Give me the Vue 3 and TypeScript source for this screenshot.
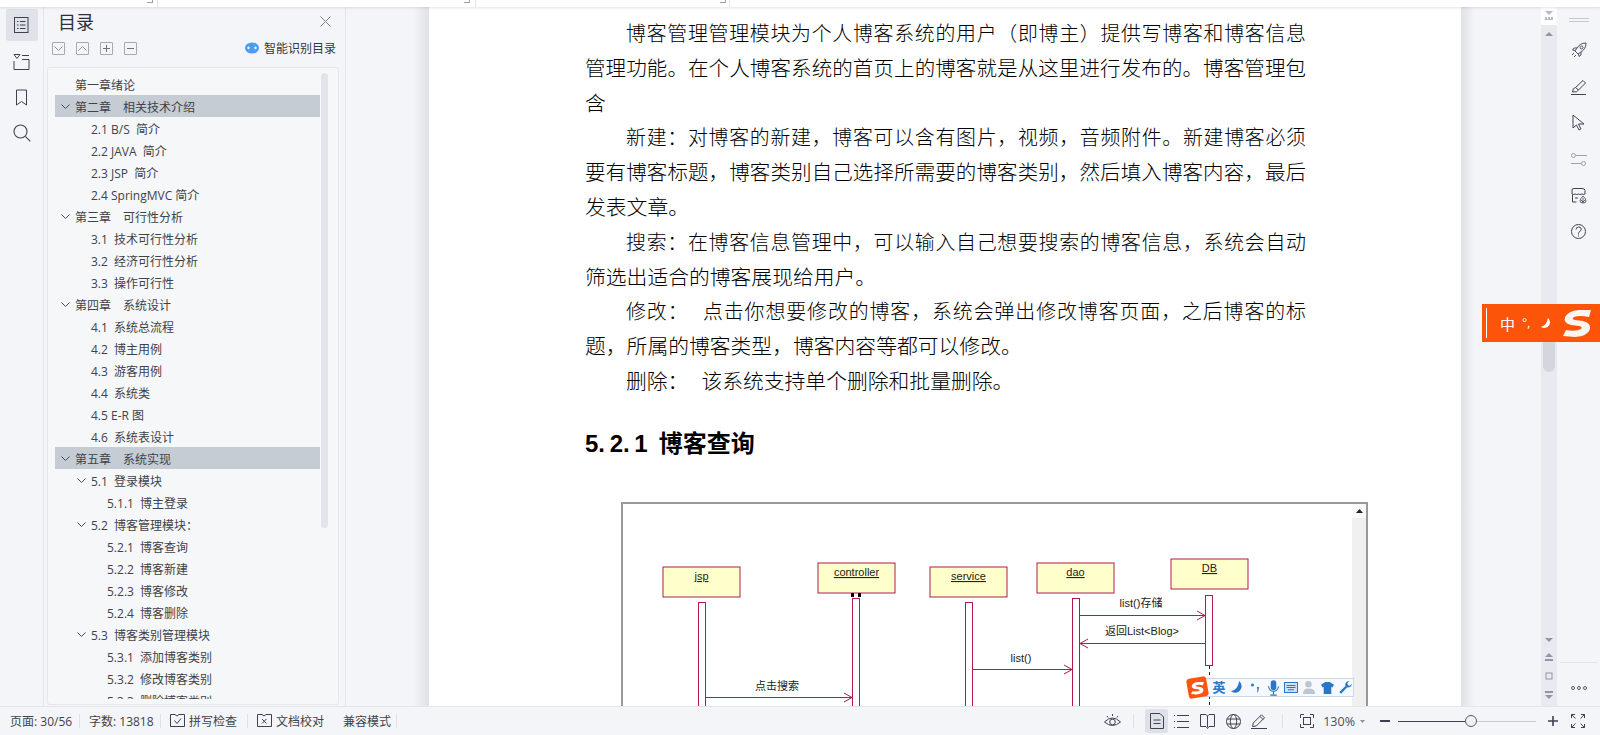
<script setup lang="ts">
interface TocRow { text: string; level: number; open?: boolean; active?: boolean }
const toc: TocRow[] = [
  { text: '第一章绪论', level: 0 },
  { text: '第二章\u3000相关技术介绍', level: 0, open: true, active: true },
  { text: '2.1 B/S  简介', level: 1 },
  { text: '2.2 JAVA  简介', level: 1 },
  { text: '2.3 JSP  简介', level: 1 },
  { text: '2.4 SpringMVC 简介', level: 1 },
  { text: '第三章\u3000可行性分析', level: 0, open: true },
  { text: '3.1  技术可行性分析', level: 1 },
  { text: '3.2  经济可行性分析', level: 1 },
  { text: '3.3  操作可行性', level: 1 },
  { text: '第四章\u3000系统设计', level: 0, open: true },
  { text: '4.1  系统总流程', level: 1 },
  { text: '4.2  博主用例', level: 1 },
  { text: '4.3  游客用例', level: 1 },
  { text: '4.4  系统类', level: 1 },
  { text: '4.5 E-R 图', level: 1 },
  { text: '4.6  系统表设计', level: 1 },
  { text: '第五章\u3000系统实现', level: 0, open: true, active: true },
  { text: '5.1  登录模块', level: 1, open: true },
  { text: '5.1.1  博主登录', level: 2 },
  { text: '5.2  博客管理模块：', level: 1, open: true },
  { text: '5.2.1  博客查询', level: 2 },
  { text: '5.2.2  博客新建', level: 2 },
  { text: '5.2.3  博客修改', level: 2 },
  { text: '5.2.4  博客删除', level: 2 },
  { text: '5.3  博客类别管理模块', level: 1, open: true },
  { text: '5.3.1  添加博客类别', level: 2 },
  { text: '5.3.2  修改博客类别', level: 2 },
  { text: '5.3.3  删除博客类别', level: 2 },
]
const paragraphs: string[][] = [
  ['博客管理管理模块为个人博客系统的用户（即博主）提供写博客和博客信息', '管理功能。在个人博客系统的首页上的博客就是从这里进行发布的。博客管理包', '含'],
  ['新建：对博客的新建，博客可以含有图片，视频，音频附件。新建博客必须', '要有博客标题，博客类别自己选择所需要的博客类别，然后填入博客内容，最后', '发表文章。'],
  ['搜索：在博客信息管理中，可以输入自己想要搜索的博客信息，系统会自动', '筛选出适合的博客展现给用户。'],
  ['修改：  点击你想要修改的博客，系统会弹出修改博客页面，之后博客的标', '题，所属的博客类型，博客内容等都可以修改。'],
  ['删除：  该系统支持单个删除和批量删除。'],
]
const boxes = [
  { x: 42, y: 65, label: 'jsp' },
  { x: 197, y: 61, label: 'controller' },
  { x: 309, y: 65, label: 'service' },
  { x: 416, y: 61, label: 'dao' },
  { x: 550, y: 57, label: 'DB' },
]
const bars = [
  { x: 77, y: 100, h: 160 },
  { x: 231, y: 96, h: 160 },
  { x: 344, y: 100, h: 160 },
  { x: 451, y: 96, h: 160 },
  { x: 584, y: 93, h: 70 },
]
</script>

<template>
  <div class="app">
    <div class="top-strip">
      <i class="crop c1"></i><i class="cline l1"></i>
      <i class="crop c2"></i><i class="cline l2"></i>
      <i class="crop c3"></i><i class="cline l3"></i>
    </div>
    <div class="main">
      <aside class="rail">
        <button class="rail-btn on">
          <svg width="16" height="16" viewBox="0 0 16 16" fill="none" stroke="#3c4252"><rect x=".5" y=".5" width="13.5" height="15"/><path d="M3 4.500h1.500M6 4.500h5.500M3 8h1.500M6 8h5.500M3 11.500h1.500M6 11.500h5.500"/></svg>
        </button>
        <button class="rail-btn">
          <svg width="17" height="17" viewBox="0 0 17 17" fill="none" stroke="#3c4252"><path d="M1 1.500h6L4 5.500zM9 2.500h7M1 8v8.500h15V6.500H9"/></svg>
        </button>
        <button class="rail-btn">
          <svg width="13" height="17" viewBox="0 0 13 17" fill="none" stroke="#3c4252"><path d="M1.500 1h10v15l-5-3.500-5 3.500z"/></svg>
        </button>
        <button class="rail-btn">
          <svg width="18" height="18" viewBox="0 0 18 18" fill="none" stroke="#3c4252" stroke-width="1.100"><circle cx="7.500" cy="7.500" r="6.500"/><path d="M12.300 12.300l5 5"/></svg>
        </button>
      </aside>

      <section class="panel">
        <header class="panel-head">
          <span class="panel-title">目录</span>
          <svg class="close" width="11" height="11" viewBox="0 0 11 11" stroke="#7d828c"><path d="M.5.500l10 10M10.500.500l-10 10"/></svg>
        </header>
        <div class="tools">
          <span class="tool"><svg width="9" height="5" viewBox="0 0 9 5" fill="none" stroke="#8b909a"><path d="M.5.500l4 4 4-4"/></svg></span>
          <span class="tool"><svg width="9" height="5" viewBox="0 0 9 5" fill="none" stroke="#8b909a"><path d="M.5 4.500l4-4 4 4"/></svg></span>
          <span class="tool"><svg width="7" height="7" viewBox="0 0 7 7" stroke="#6c717b"><path d="M0 3.500h7M3.500 0v7"/></svg></span>
          <span class="tool"><svg width="7" height="7" viewBox="0 0 7 7" stroke="#6c717b"><path d="M0 3.500h7"/></svg></span>
          <span class="smart">
            <svg width="14" height="12" viewBox="0 0 14 12"><ellipse cx="7" cy="6" rx="7" ry="5.600" fill="#4d9bf2"/><path d="M2.500 5.500q1-1 2 0M9.500 5.500q1-1 2 0" stroke="#fff" fill="none"/><circle cx="3.500" cy="6.300" r="1" fill="#fff"/><circle cx="10.500" cy="6.300" r="1" fill="#fff"/></svg>
            智能识别目录
          </span>
        </div>
        <div class="toc-box">
          <div class="toc-list">
            <div v-for="r in toc" :key="r.text" class="toc-row" :class="[`lv${r.level}`, { active: r.active }]">
              <svg v-if="r.open" class="chev" width="9" height="5" viewBox="0 0 9 5" fill="none" stroke="#444a55"><path d="M.5.500l4 4 4-4"/></svg>
              <span>{{ r.text }}</span>
            </div>
          </div>
          <div class="toc-scroll"></div>
        </div>
      </section>

      <main class="doc">
        <article class="page">
          <p v-for="(para, i) in paragraphs" :key="i" class="para">
            <span
              v-for="(line, j) in para"
              :key="j"
              class="line"
              :class="{ first: j === 0, just: j < para.length - 1 }"
            >{{ line }}</span>
          </p>
          <h3 class="heading"><span class="num">5. 2. 1</span>博客查询</h3>
          <svg class="diagram" width="747" height="240" viewBox="0 0 747 240">
            <rect x="731" y="1" width="15" height="239" fill="#f0f0f0"/>
            <rect x="731" y="1" width="15" height="15" fill="#fafafa"/>
            <path d="M735 11h7l-3.500-4z" fill="#222"/>
            <rect x="1" y="1" width="745" height="240" fill="none" stroke="#999" stroke-width="2"/>
            <g v-for="b in boxes" :key="b.label">
              <rect :x="b.x" :y="b.y" width="77" height="30" fill="#ffffcc" stroke="#b01a50"/>
              <text :x="b.x + 38.500" :y="b.y + 13" class="box-label">{{ b.label }}</text>
            </g>
            <rect x="230" y="91" width="3" height="4" fill="#000"/>
            <rect x="237" y="91" width="3" height="4" fill="#000"/>
            <rect v-for="b in bars" :key="b.x" :x="b.x + .5" :y="b.y + .5" width="7" :height="b.h" fill="#fff" stroke="#b01a50"/>
            <path d="M588.500 164v80" stroke="#222" stroke-dasharray="3 3" fill="none"/>
            <g fill="none" stroke="#b01a50">
              <path d="M459 113.500h125M576 109l8 4.500-8 4.500"/>
              <path d="M584 141.500H459M467 137l-8 4.500 8 4.500"/>
              <path d="M352 167.500h99M443 163l8 4.500-8 4.500"/>
              <path d="M85 195.500h146M223 191l8 4.500-8 4.500"/>
            </g>
            <text x="520" y="105" class="msg">list()存储</text>
            <text x="521" y="133" class="msg">返回List&lt;Blog&gt;</text>
            <text x="400" y="160" class="msg">list()</text>
            <text x="156" y="188" class="msg">点击搜索</text>
          </svg>
          <div class="ime-bar">
            <span class="ime-logo"><svg width="23" height="23" viewBox="0 0 23 23"><rect x="1.500" y="1.500" width="20" height="20" rx="3" fill="#fb5511" transform="rotate(-10 11.500 11.500)"/><path transform="translate(5 6) scale(.46)" d="M28 0L26 7Q16 5 11 7Q8 9 12 10L20 11Q28 13 27 19Q25 26 12 27L0 26L3 20Q13 22 18 19Q20 17 16 16L8 15Q0 13 2 7Q5 1 16 0Z" fill="#fff"/></svg></span>
            <span class="ime-en">英</span>
            <svg width="13" height="13" viewBox="0 0 12 12"><path d="M7.500 0A6 6 0 1 1 0 9.500Q6.500 8 7.500 0z" fill="#2a77c9"/></svg>
            <svg width="8" height="10" viewBox="0 0 8 10" fill="#2a77c9"><circle cx="1.500" cy="2" r="1.500"/><path d="M6 4h2q0 4-2 6q.8-3 0-6z"/></svg>
            <svg width="11" height="16" viewBox="0 0 10 14" fill="#2a77c9"><rect x="2.500" y="0" width="5" height="9" rx="2.500"/><path d="M.5 5.500a4.500 4.500 0 0 0 9 0M5 10v3M2 13.500h6" fill="none" stroke="#2a77c9"/></svg>
            <svg width="14" height="11" viewBox="0 0 14 11"><rect x=".5" y=".5" width="13" height="10" fill="#cfe2f7" stroke="#2a77c9"/><path d="M2.500 3.500h9M2.500 5.500h9M4 7.800h6" stroke="#2a77c9"/></svg>
            <svg width="13" height="13" viewBox="0 0 12 12" fill="#bcc6d2"><circle cx="5" cy="3" r="3"/><path d="M0 12q0-5 5-5t6 3v2z"/></svg>
            <svg width="13" height="12" viewBox="0 0 12 11" fill="#2a77c9"><path d="M4 0h4l4 2.500L10.500 5 9.500 4.500V11h-7V4.500L1.500 5 0 2.500z"/></svg>
            <svg width="13" height="13" viewBox="0 0 12 12" fill="#2a77c9"><path d="M11.800 2.500A3.300 3.300 0 0 1 7.500 5.800L2 11.800.3 10.200 6 4.600A3.300 3.300 0 0 1 9.500.2L7.700 2l.5 1.900 1.900.4z"/></svg>
          </div>
        </article>
      </main>

      <div class="vscroll">
        <div class="vs-top"><svg width="10" height="10" viewBox="0 0 10 10" fill="#b5bac6"><path d="M1 0h8L5 4zM1 8V6h2v2h1V6h2v2h1V6h2v3H1z"/></svg></div>
        <svg class="vs-up" width="8" height="4" viewBox="0 0 8 4" fill="#8f96a8"><path d="M4 0l4 4H0z"/></svg>
        <div class="vs-thumb"></div>
        <div class="vs-foot">
          <svg width="8" height="4" viewBox="0 0 8 4" fill="#8f96a8"><path d="M0 0h8L4 4z"/></svg>
          <svg width="8" height="8" viewBox="0 0 8 8" fill="#8f96a8"><path d="M4 0l4 4H0zM0 6h8v2H0z"/></svg>
          <svg width="8" height="8" viewBox="0 0 8 8" fill="none" stroke="#8f96a8"><rect x="1" y="1" width="6" height="6"/></svg>
          <svg width="8" height="8" viewBox="0 0 8 8" fill="#8f96a8"><path d="M0 0h8v2H0zM0 4h8L4 8z"/></svg>
        </div>
      </div>

      <aside class="right-rail">
        <svg class="handle" width="20" height="4" viewBox="0 0 20 4" stroke="#c4c8d0"><path d="M0 .5h20M0 3.500h20"/></svg>
        <svg class="rocket" width="16" height="16" viewBox="0 0 16 16" fill="none" stroke="#4a5163"><path d="M15 1q-6 0-9 5L4 9l3 3 3-2q5-3 5-9zM6 6H3L1.500 8 4 8.500M10 10v3l-2 1.500L7.500 12"/><circle cx="10.500" cy="5.500" r="1.500"/><path d="M1 13l2-2M3 15l2-2"/></svg>
        <svg class="brush" width="16" height="15" viewBox="0 0 16 15" fill="none" stroke="#3c4252"><path d="M0 14.500h15M1.500 12q0-4 3-4.500L12 .500l2.500 2.500L7.500 10q-1 2.500-6 2zM4.500 7.500l3 2.500"/></svg>
        <svg class="cursor" width="13" height="17" viewBox="0 0 13 17" fill="none" stroke="#3c4252"><path d="M1 1v13l3.500-3 2.500 5 2-1-2.500-5H12z"/></svg>
        <svg class="sliders" width="16" height="13" viewBox="0 0 16 13" fill="none" stroke="#9a9fab"><circle cx="2.500" cy="2.500" r="2"/><path d="M5 2.500h11M0 10.500h10.500"/><circle cx="12.500" cy="10.500" r="2"/></svg>
        <svg class="shop" width="16" height="16" viewBox="0 0 16 16" fill="none" stroke="#3c4252"><path d="M1 6V2q0-1.500 2-1.500h8q3 0 3 2V6q-2 1-3 0-2 1-3.500 0-2 1-3.500 0-2 1-3 0zM1.500 6.500V14h4M4 10h3"/><path d="M12 8q3 3 3 5t-3 2-3-2 3-5zM12 10v5M10 12l2 2 2-2" stroke-width=".8"/></svg>
        <svg class="help" width="15" height="15" viewBox="0 0 15 15" fill="none" stroke="#3c4252"><circle cx="7.500" cy="7.500" r="7"/><path d="M5 5.500q.3-2.500 2.600-2.500T10.300 5q0 1.500-1.400 2.300T7.500 9.500v1M7.500 11.500v1"/></svg>
        <div class="rail-bottom">
          <span class="r-sep"></span>
          <svg width="16" height="4" viewBox="0 0 16 4" fill="none" stroke="#555b68"><circle cx="2" cy="2" r="1.500"/><circle cx="8" cy="2" r="1.500"/><circle cx="14" cy="2" r="1.500"/></svg>
        </div>
      </aside>
    </div>

    <div class="ime-flag">
      <i class="flag-line"></i>
      <span class="flag-zh">中</span>
      <span class="flag-dot">°,</span>
      <svg width="11" height="11" viewBox="0 0 12 12"><path d="M7.500 0A6 6 0 1 1 0 9.500Q6.500 8 7.500 0z" fill="#fff"/></svg>
      <svg class="flag-s" width="28" height="27" viewBox="0 0 28 27"><path d="M28 0L26 7Q16 5 11 7Q8 9 12 10L20 11Q28 13 27 19Q25 26 12 27L0 26L3 20Q13 22 18 19Q20 17 16 16L8 15Q0 13 2 7Q5 1 16 0Z" fill="#f8f5f2"/></svg>
    </div>

    <footer class="status">
      <div class="st-left">
        <span class="st-item w1">页面: 30/56</span><i class="sep"></i>
        <span class="st-item w2">字数: 13818</span><i class="sep"></i>
        <span class="st-item w3">
          <svg width="15" height="14" viewBox="0 0 15 14" fill="none" stroke="#3c4252"><path d="M.5.500h4.500l2 1.500 2-1.500h5.500v12H.5zM4.500 6.500l2.500 3 4-5"/></svg>
          拼写检查
        </span><i class="sep"></i>
        <span class="st-item w3">
          <svg width="15" height="14" viewBox="0 0 15 14" fill="none" stroke="#3c4252"><path d="M.5.500h4.500l2 1.500 2-1.500h5.500v12H.5zM5 5l4.500 4.500M9.500 5L5 9.500"/></svg>
          文档校对
        </span>
        <span class="st-item w4">兼容模式</span><i class="sep"></i>
      </div>
      <div class="st-right">
        <svg class="eye" width="17" height="15" viewBox="0 0 17 15" fill="none" stroke="#3c4252"><path d="M.5 9q8-8 16 0-8 7-16 0z"/><circle cx="8.500" cy="9" r="2.800"/><path d="M3 3l1 1.500M8.500 1v2M14 3l-1 1.500"/></svg>
        <i class="sep s-a"></i>
        <span class="doc-on"><svg width="14" height="16" viewBox="0 0 14 16" fill="none" stroke="#3c4252"><path d="M.5.500h9.500l3.500 3.500v11.500H.5zM3.500 7h7M3.500 10.500h7"/></svg></span>
        <span class="v-ico"><svg width="15" height="13" viewBox="0 0 15 13" fill="none" stroke="#3c4252"><path d="M3 .5h12M0 .5h1M3 6.500h12M0 6.500h1M3 12.500h12M0 12.500h1"/></svg></span>
        <span class="v-ico"><svg width="15" height="15" viewBox="0 0 15 15" fill="none" stroke="#3c4252"><path d="M.5.500h5.500l1.500 1.500L9 .5h5.500v12H9l-1.500 2-1.500-2H.5zM7.500 2v11"/></svg></span>
        <span class="v-ico"><svg width="15" height="15" viewBox="0 0 15 15" fill="none" stroke="#3c4252"><circle cx="7.500" cy="7.500" r="7"/><ellipse cx="7.500" cy="7.500" rx="3.200" ry="7"/><path d="M1 5h13M1 10h13"/></svg></span>
        <span class="v-ico"><svg width="16" height="15" viewBox="0 0 16 15" fill="none" stroke="#3c4252"><path d="M0 14.500h16M1.500 12.500l.8-3.500L10.500.800l3 3-8.200 8.200zM9 2.500l3 3"/></svg></span>
        <i class="sep s-b"></i>
        <svg class="fit" width="14" height="14" viewBox="0 0 14 14" fill="none" stroke="#3c4252"><path d="M4 .5H.5V4M10 .5h3.500V4M.5 10v3.500H4M13.500 10v3.500H10"/><rect x="3.500" y="3.500" width="7" height="7"/></svg>
        <span class="zoom-val">130%</span>
        <svg class="caret" width="5" height="3" viewBox="0 0 5 3" fill="#8a8f9a"><path d="M0 0h5L2.500 3z"/></svg>
        <i class="zoom-minus"></i>
        <div class="slider"><i class="fill"></i><i class="thumb"></i><i class="rest"></i></div>
        <svg class="plus" width="10" height="10" viewBox="0 0 10 10" stroke="#3c4252" stroke-width="1.600"><path d="M0 5h10M5 0v10"/></svg>
        <svg class="fs" width="14" height="14" viewBox="0 0 14 14" fill="none" stroke="#3c4252"><path d="M.5 4V.5H4M.5.500l4 4M10 .5h3.500V4M13.500.500l-4 4M.5 10v3.500H4M.5 13.500l4-4M13.500 10v3.500H10M13.500 13.500l-4-4"/></svg>
      </div>
    </footer>
  </div>
</template>

<style scoped>
.app {
  width: 1600px;
  height: 735px;
  display: flex;
  flex-direction: column;
  position: relative;
  overflow: hidden;
  background: #f4f5f8;
  font-family: "Open Sans", "Noto Sans CJK SC", sans-serif;
  color: #3c4048;
}
.top-strip {
  height: 7px;
  flex: none;
  background: #fff;
  position: relative;
  z-index: 3;
  box-shadow: 0 1px 3px rgba(60, 65, 80, .14);
}
.crop, .cline { position: absolute; top: 0; display: block; }
.crop { width: 5px; height: 2px; border: solid #9aa0ae; border-width: 0 1px 1px 0; }
.cline { width: 1px; height: 7px; background: #e3e4e8; }
.c1 { left: 147px; } .l1 { left: 157px; }
.c2 { left: 464px; } .l2 { left: 475px; }
.c3 { left: 720px; } .l3 { left: 729px; }

.main { flex: 1; min-height: 0; display: flex; }

.rail {
  width: 44px;
  box-sizing: border-box;
  flex: none;
  border-right: 1px solid #e4e6ea;
  display: flex;
  flex-direction: column;
  align-items: center;
  padding-top: 2px;
  gap: 4px;
}
.rail-btn {
  width: 32px;
  height: 32px;
  padding: 0;
  border: 0;
  border-radius: 3px;
  background: transparent;
  display: flex;
  align-items: center;
  justify-content: center;
}
.rail-btn.on { background: #dfe2e8; }

.panel {
  width: 302px;
  flex: none;
  box-sizing: border-box;
  border-right: 1px solid #e4e6ea;
  display: flex;
  flex-direction: column;
  padding: 0 5px 1px 3px;
}
.panel-head {
  height: 28px;
  box-sizing: border-box;
  display: flex;
  align-items: center;
  justify-content: space-between;
  padding: 0 9px 0 11px;
}
.panel-title { font-size: 18px; color: #2c3038; }
.tools {
  display: flex;
  align-items: center;
  height: 20px;
  box-sizing: border-box;
  padding: 6px 4px 0 5px;
  gap: 11px;
}
.tool {
  width: 13px;
  height: 13px;
  box-sizing: border-box;
  border: 1px solid #a5a9b2;
  border-radius: 1px;
  display: flex;
  align-items: center;
  justify-content: center;
}
.smart {
  margin-left: auto;
  display: flex;
  align-items: center;
  gap: 5px;
  font-size: 12px;
  color: #33373f;
}
.toc-box {
  flex: 1;
  min-height: 0;
  margin-top: 12px;
  border: 1px solid #e5e7eb;
  border-radius: 3px;
  padding: 5px 0 5px 7px;
  display: flex;
  background: #f6f7f9;
  width: 292px;
  box-sizing: border-box;
}
.toc-list { width: 265px; flex: none; overflow: hidden; }
.toc-row {
  height: 22px;
  box-sizing: border-box;
  padding-top: 1px;
  display: flex;
  align-items: center;
  font-size: 12px;
  white-space: pre;
  color: #3e424a;
  position: relative;
}
.toc-row.active { background: #c5ccd4; }
.lv0 { padding-left: 20px; }
.lv1 { padding-left: 36px; }
.lv2 { padding-left: 52px; }
.chev { position: absolute; top: 9px; }
.lv0 .chev { left: 6px; }
.lv1 .chev { left: 22px; }
.toc-scroll {
  width: 7px;
  height: 455px;
  margin-left: 1px;
  border-radius: 4px;
  background: #e2e4e9;
}

.doc {
  width: 1195px;
  flex: none;
  box-sizing: border-box;
  padding: 0 80px 0 83px;
  background:
    linear-gradient(to left, #dfe1e6, #f4f5f8 16px) no-repeat 0 0 / 83px 100%,
    linear-gradient(to right, #dfe1e6, #f4f5f8 14px) no-repeat 100% 0 / 80px 100%,
    #f4f5f8;
}
.page {
  height: 100%;
  background: #fff;
  padding: 10px 155px 0 156px;
  box-sizing: border-box;
  overflow: hidden;
  position: relative;
}
.para {
  margin: 0;
  font-family: "Liberation Serif", "Noto Sans CJK SC", serif;
  font-weight: 300;
  line-height: 34.8px;
  color: #000;
}
.line { display: block; white-space: pre-wrap; font-size: 20.800px; word-spacing: 1.300px; height: 34.8px; }
.line.first { padding-left: 41px; }
.line.just { font-size: 20.500px; text-align: justify; text-align-last: justify; }
.line.just.first { font-size: 19.900px; }
.heading {
  margin: 27px 0 0;
  height: 34px;
  line-height: 34px;
  font-family: "Liberation Sans", "Noto Sans CJK SC", sans-serif;
  font-size: 24px;
  font-weight: 700;
  color: #000;
}
.num { word-spacing: -2px; margin-right: 11px; }
.diagram {
  display: block;
  margin: 41px 0 0 36px;
}
.box-label {
  font-family: "Liberation Sans", sans-serif;
  font-size: 11px;
  text-anchor: middle;
  text-decoration: underline;
  fill: #222;
}
.msg {
  font-family: "Liberation Sans", "Noto Sans CJK SC", sans-serif;
  font-size: 11px;
  text-anchor: middle;
  fill: #222;
}
.ime-bar {
  position: absolute;
  left: 770px;
  top: 671px;
  width: 155px;
  height: 19px;
  padding-left: 10px;
  box-sizing: border-box;
  background: #f6f9fd;
  border: 1px solid #c9d6e6;
  display: grid;
  grid-template-columns: repeat(8, 18px);
  justify-items: center;
  align-items: center;
}
.ime-logo { position: absolute; left: -14px; top: -3px; height: 23px; }
.ime-en { font-size: 13px; line-height: 17px; font-weight: 700; color: #2a77c9; }

.vscroll {
  width: 16px;
  flex: none;
  background: #e8eaef;
  display: flex;
  flex-direction: column;
  align-items: center;
  position: relative;
}
.vs-top {
  width: 16px;
  height: 18px;
  background: #fff;
  display: flex;
  align-items: center;
  justify-content: center;
}
.vs-up { margin-top: 7px; }
.vs-thumb {
  width: 12px;
  height: 42px;
  margin-top: 294px;
  flex: none;
  border-radius: 6px;
  background: #d3d6dd;
}
.vs-foot {
  position: absolute;
  bottom: 7px;
  left: 4px;
  display: flex;
  flex-direction: column;
  align-items: center;
  gap: 11px;
}

.right-rail {
  width: 43px;
  flex: none;
  display: flex;
  flex-direction: column;
  align-items: center;
  padding-top: 11px;
  position: relative;
}
.right-rail > svg { flex: none; }
.handle { margin-bottom: 20px; }
.rocket { margin-bottom: 22px; }
.brush { margin-bottom: 19px; }
.cursor { margin-bottom: 22px; }
.sliders { margin-bottom: 22px; }
.shop { margin-bottom: 20px; }
.rail-bottom {
  margin-top: auto;
  width: 38px;
  display: flex;
  flex-direction: column;
  align-items: center;
  gap: 23px;
  padding-bottom: 16px;
}
.r-sep { width: 38px; height: 1px; background: #e2e4e9; }

.ime-flag {
  position: absolute;
  left: 1482px;
  top: 304px;
  width: 118px;
  height: 38px;
  background: #fc5509;
  display: flex;
  align-items: center;
  color: #fff;
  z-index: 4;
}
.flag-line { width: 1px; height: 30px; background: #fff; margin-left: 4px; flex: none; }
.flag-zh { font-size: 15px; margin-left: 13px; }
.flag-dot { font-size: 12px; margin: 0 11px 0 7px; line-height: 1; }
.flag-s { margin-left: 11px; }

.status {
  height: 29px;
  flex: none;
  box-sizing: border-box;
  border-top: 1px solid #e4e6ea;
  background: #f4f5f8;
  display: flex;
  align-items: center;
  justify-content: space-between;
  font-size: 12px;
  color: #3e424a;
  position: relative;
  z-index: 2;
}
.st-left { display: flex; align-items: center; padding-left: 10px; }
.st-item { display: flex; align-items: center; gap: 1px; white-space: pre; }
.w1 { width: 69px; }
.w2 { width: 71px; margin-left: 9px; }
.w3 { width: 77px; margin-left: 9px; }
.w4 { width: 53px; margin-left: 9px; }
.sep { display: block; width: 1px; height: 14px; background: #dfe1e6; flex: none; }
.st-right { display: flex; align-items: center; padding-right: 15px; }
.eye { margin-bottom: 2px; }
.s-a { margin: 0 11px 0 12px; }
.doc-on {
  width: 23px;
  height: 24px;
  border-radius: 2px;
  background: #dee2e8;
  display: flex;
  align-items: center;
  justify-content: center;
}
.v-ico { width: 26px; display: flex; justify-content: center; }
.s-b { margin: 0 17px 0 10px; }
.zoom-val { margin-left: 9px; font-size: 12.500px; color: #4a5060; }
.caret { margin-left: 5px; }
.zoom-minus { display: block; width: 10px; height: 2px; background: #3c4252; margin-left: 15px; }
.slider { width: 138px; margin-left: 8px; display: flex; align-items: center; }
.fill { display: block; width: 67px; height: 1px; background: #3c4252; }
.thumb { display: block; width: 12px; height: 12px; flex: none; border-radius: 50%; background: #f1f2f4; border: 1px solid #555b68; box-sizing: border-box; }
.rest { display: block; flex: 1; height: 1px; background: #c5c8cf; }
.plus { margin-left: 12px; }
.fs { margin-left: 13px; }
</style>

<style>
html, body { margin: 0; background: #f4f5f8; }
</style>
